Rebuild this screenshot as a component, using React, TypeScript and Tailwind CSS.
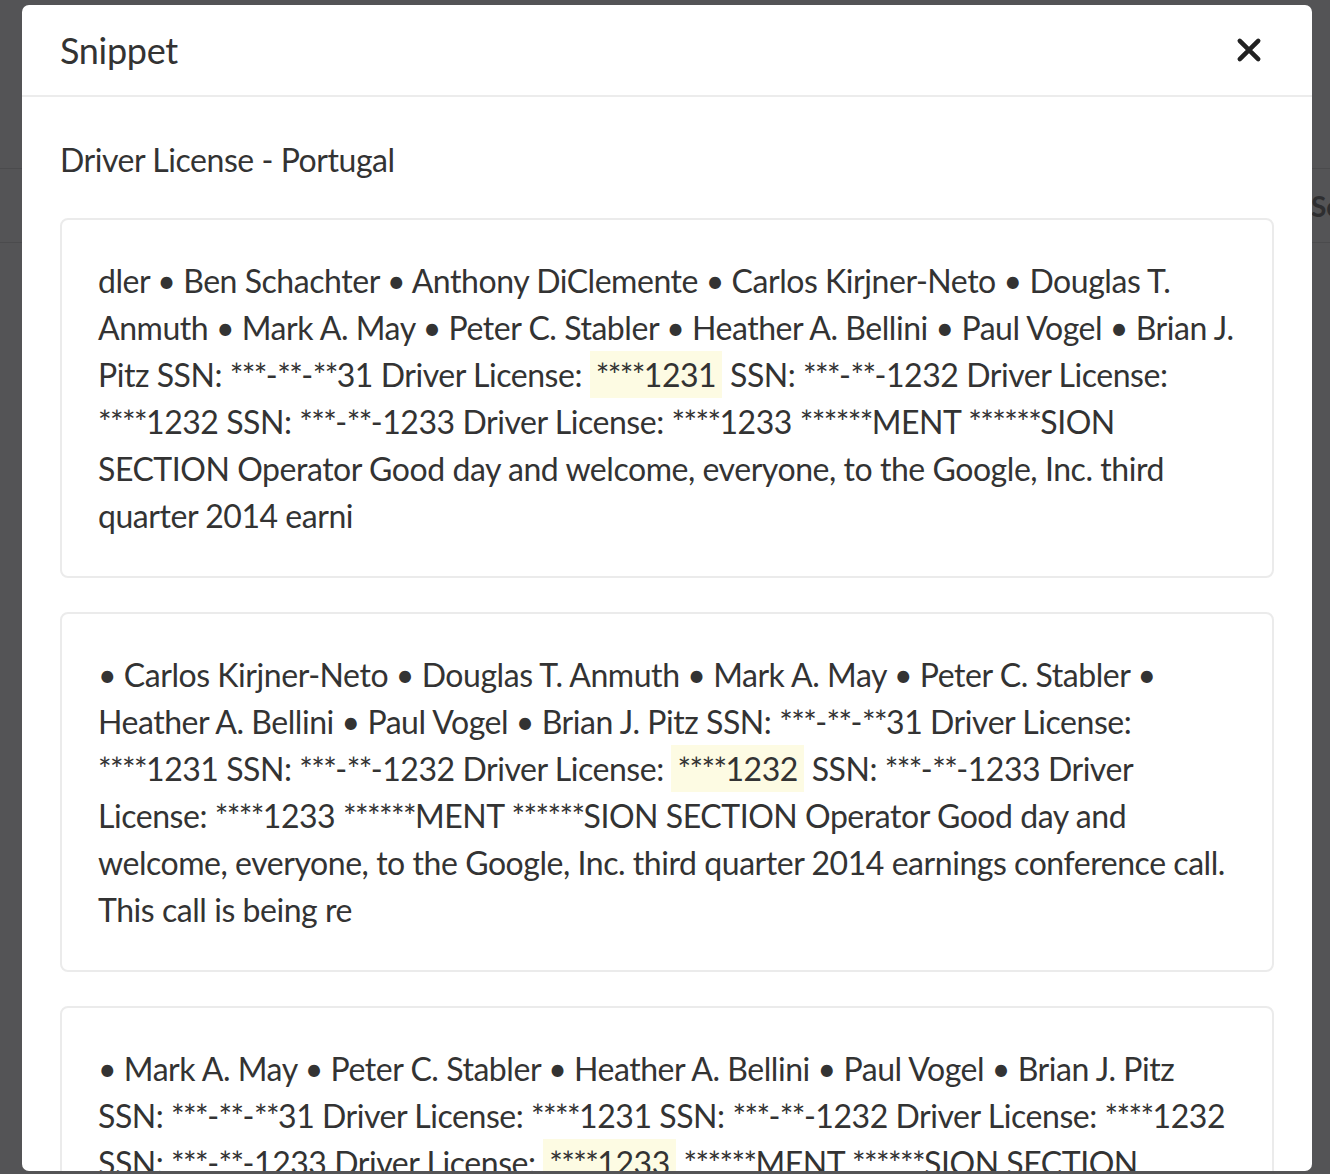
import React from "react";

const font = { fontFamily: "Lato, 'Open Sans', sans-serif" };

function Txt({ s }: { s: string }) {
  const parts = s.split(/(\*+)/);
  return (
    <>
      {parts.map((p, i) =>
        p.startsWith("*") ? (
          <span key={i} className="tracking-[-1.6px]">
            {p}
          </span>
        ) : (
          <React.Fragment key={i}>{p}</React.Fragment>
        )
      )}
    </>
  );
}

function Hl({ children }: { children: string }) {
  return (
    <span className="inline-block bg-[#fdfbe3] px-[6px] leading-[47px]">
      <Txt s={children} />
    </span>
  );
}

function Card({ before, hl, after }: { before: string; hl: string; after: string }) {
  return (
    <div className="rounded-[8px] border-2 border-[#ebebeb] bg-white px-[36px] py-[37px]">
      <p className="text-[32px] leading-[47px] text-[#333333] tracking-[-0.45px]">
        <Txt s={before} />
        <Hl>{hl}</Hl>
        <Txt s={after} />
      </p>
    </div>
  );
}

export default function App() {
  return (
    <div className="relative h-[1174px] w-[1330px] overflow-hidden bg-[#545456]" style={font}>
      {/* background page behind the overlay */}
      <div className="absolute inset-0 flex flex-col">
        <div className="h-[168px]" />
        <div className="flex h-[75px] items-center border-y border-[#4b4b4d] pl-[1311px]">
          <span className="whitespace-nowrap text-[28px] font-bold text-[#2e2e30]">Search</span>
        </div>
      </div>

      {/* modal */}
      <div className="absolute left-[22px] top-[5px] flex h-[1166px] w-[1290px] flex-col overflow-hidden rounded-[7px] bg-white">
        <div className="flex h-[92px] shrink-0 items-center justify-between border-b-2 border-[#ececec] pl-[38px] pr-[50px]">
          <h2 className="text-[36px] leading-none text-[#333333] tracking-[-0.3px]">Snippet</h2>
          <svg width="26" height="26" viewBox="0 0 24 24" className="mb-[1px]">
            <path d="M3.5 3.5 L20.5 20.5 M20.5 3.5 L3.5 20.5" stroke="#222" strokeWidth="4.2" strokeLinecap="round" />
          </svg>
        </div>
        <div className="flex flex-col px-[38px]">
          <div className="pt-[48px] pb-[43px] text-[32px] leading-[30px] text-[#333333] tracking-[-0.45px]">Driver License - Portugal</div>
          <div className="flex flex-col gap-[34px]">
            <Card
              before="dler • Ben Schachter • Anthony DiClemente • Carlos Kirjner-Neto • Douglas T. Anmuth • Mark A. May • Peter C. Stabler • Heather A. Bellini • Paul Vogel • Brian J. Pitz SSN: ***-**-**31 Driver License: "
              hl="****1231"
              after=" SSN: ***-**-1232 Driver License: ****1232 SSN: ***-**-1233 Driver License: ****1233 ******MENT ******SION SECTION Operator Good day and welcome, everyone, to the Google, Inc. third quarter 2014 earni"
            />
            <Card
              before="• Carlos Kirjner-Neto • Douglas T. Anmuth • Mark A. May • Peter C. Stabler • Heather A. Bellini • Paul Vogel • Brian J. Pitz SSN: ***-**-**31 Driver License: ****1231 SSN: ***-**-1232 Driver License: "
              hl="****1232"
              after=" SSN: ***-**-1233 Driver License: ****1233 ******MENT ******SION SECTION Operator Good day and welcome, everyone, to the Google, Inc. third quarter 2014 earnings conference call. This call is being re"
            />
            <Card
              before="• Mark A. May • Peter C. Stabler • Heather A. Bellini • Paul Vogel • Brian J. Pitz SSN: ***-**-**31 Driver License: ****1231 SSN: ***-**-1232 Driver License: ****1232 SSN: ***-**-1233 Driver License: "
              hl="****1233"
              after=" ******MENT ******SION SECTION Operator Good day and welcome, everyone, to the Google, Inc. third quarter 2014 earnings conference call. This call is being recorded."
            />
          </div>
        </div>
      </div>
    </div>
  );
}
